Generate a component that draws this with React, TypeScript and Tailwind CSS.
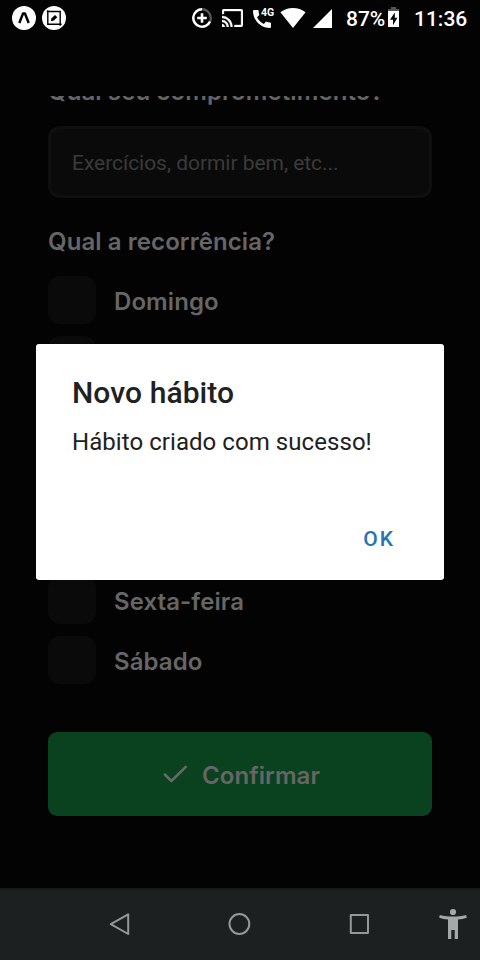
import React from "react";

const days = ["Domingo", "Segunda-feira", "Terça-feira", "Quarta-feira", "Quinta-feira", "Sexta-feira", "Sábado"];

function StatusBar() {
  return (
    <header className="flex h-9 shrink-0 items-center pl-3 font-['Roboto',sans-serif] text-white">
      <svg className="h-6 w-6 shrink-0" viewBox="0 0 24 24">
        <circle cx="12" cy="12" r="12" fill="#fff" />
        <path d="M7.3 17 L11.1 7.4 H12.9 L16.7 17" fill="none" stroke="#000" strokeWidth="2.5" strokeLinejoin="round" />
      </svg>
      <svg className="ml-1.5 h-6 w-6 shrink-0" viewBox="0 0 24 24">
        <circle cx="12" cy="12" r="12" fill="#fff" />
        <path d="M4.8 5.5H18.2V19.8M5.8 4.2V18.2H19.6" fill="none" stroke="#000" strokeWidth="1.4" />
        <path d="M8.8 15.2L9.6 12.2 13 8.9 15.3 11.2 11.9 14.5Z" fill="#000" />
      </svg>
      <svg className="ml-[126px] h-5 w-5 shrink-0" viewBox="0 0 20 20" fill="none" stroke="#fff">
        <path d="M10 1.3A8.7 8.7 0 0 1 17.8 13.8" stroke="#555" strokeWidth="2.4" />
        <path d="M10 1.3A8.7 8.7 0 1 0 18 13.4" strokeWidth="2.5" />
        <path d="M10 5.2V14.8M5.2 10H14.8" strokeWidth="2.6" />
      </svg>
      <svg className="ml-[10px] h-[18px] w-[21px] shrink-0" viewBox="1 3 22 18" fill="#fff" stroke="#fff" strokeWidth=".35" preserveAspectRatio="none">
        <path d="M21 3H3c-1.1 0-2 .9-2 2v3h2V5h18v14h-7v2h7c1.1 0 2-.9 2-2V5c0-1.1-.9-2-2-2zM1 18v3h3c0-1.66-1.34-3-3-3zm0-4v2c2.76 0 5 2.24 5 5h2c0-3.87-3.13-7-7-7zm0-4v2c4.97 0 9 4.03 9 9h2c0-6.08-4.93-11-11-11z" />
      </svg>
      <div className="relative ml-[10px] h-[18px] w-[21px] shrink-0">
        <svg className="mt-px h-[18px] w-[18px]" viewBox="3 3 18 18" fill="#fff">
          <path d="M20.01 15.38c-1.23 0-2.42-.2-3.53-.56-.35-.12-.74-.03-1.01.24l-1.57 1.97c-2.83-1.35-5.48-3.9-6.89-6.83l1.95-1.66c.27-.28.35-.67.24-1.02-.37-1.11-.56-2.3-.56-3.53 0-.54-.45-.99-.99-.99H4.19C3.65 3 3 3.24 3 3.99 3 13.28 10.73 21 20.01 21c.71 0 .99-.63.99-1.18v-3.45c0-.54-.45-.99-.99-.99z" />
        </svg>
        <span className="absolute -top-[1px] left-[8px] text-[10.5px] leading-[9px] font-bold">4G</span>
      </div>
      <svg className="ml-[6px] h-5 w-[26px] shrink-0" viewBox="0 0 26 20" fill="#fff">
        <path d="M13 20L.4 4.2C4 1.5 8.3 0 13 0s9 1.5 12.6 4.2Z" />
      </svg>
      <svg className="ml-[7px] h-[19px] w-[19px] shrink-0" viewBox="0 0 19 19" fill="#fff">
        <path d="M0 19L19 0V19Z" />
      </svg>
      <span className="mt-0.5 ml-[14px] w-[42px] text-[21px] leading-9 font-medium">87%</span>
      <svg className="-mt-0.5 h-5 w-[11px] shrink-0" viewBox="0 0 11 20">
        <path d="M3 0H8V2H11V5H0V2H3Z" fill="#555" />
        <path d="M0 4H11V20H0Z" fill="#fff" />
        <path d="M6.8 5.5L2 12.7H5V18.2L9.4 10.8H6.8Z" fill="#000" />
      </svg>
      <span className="mt-0.5 ml-[15px] text-[21px] leading-9 font-medium">11:36</span>
    </header>
  );
}

function NavigationBar() {
  return (
    <nav className="flex h-[72px] shrink-0 items-center border-t-2 border-[#151919] bg-[#1c2021] pl-[108px]">
      <svg className="h-6 w-6" viewBox="0 0 24 24" fill="none" stroke="#959898" strokeWidth="2" strokeLinejoin="round">
        <path d="M2.8 11.2L20.2 1.4V21Z" />
      </svg>
      <svg className="ml-[95px] h-6 w-6" viewBox="0 0 24 24" fill="none" stroke="#959898" strokeWidth="2">
        <circle cx="12.4" cy="11" r="9.9" />
      </svg>
      <svg className="ml-24 h-6 w-6" viewBox="0 0 24 24" fill="none" stroke="#959898" strokeWidth="2" strokeLinejoin="round">
        <path d="M3.8 2H21V20H3.8Z" />
      </svg>
      <svg className="ml-16 h-9 w-9 shrink-0" viewBox="0 0 36 36" fill="#a5a8a8">
        <circle cx="18" cy="5" r="3.1" />
        <path d="M4.8 8C9 9.2 13.5 9.6 18 9.6S27 9.2 31.2 8L31.8 10.7C29 11.7 26 12.2 23 12.6V32H19.7V23H16.3V32H13V12.6C10 12.2 7 11.7 4.2 10.7Z" />
      </svg>
    </nav>
  );
}

export default function App() {
  return (
    <div className="relative flex h-[960px] w-[480px] flex-col overflow-hidden bg-[#030303] font-['Inter',sans-serif] text-[#666]">
      <StatusBar />
      <main className="mt-[60px] flex min-h-0 flex-1 flex-col overflow-hidden px-12">
        <h2 className="-mt-[19px] h-[49px] shrink-0 text-2xl leading-[30px] font-semibold tracking-[0.1px] whitespace-nowrap">Qual seu comprometimento?</h2>
        <input
          className="h-[72px] shrink-0 rounded-xl border-[3px] border-[#0f0f10] bg-[#0a0a0a] px-[21px] pt-0.5 font-['Roboto',sans-serif] text-[21px] tracking-[-0.04px] outline-none placeholder:text-[#3a3a3b] placeholder:opacity-100"
          placeholder="Exercícios, dormir bem, etc..."
        />
        <h2 className="mt-[29px] h-[49px] shrink-0 text-2xl leading-[30px] font-semibold tracking-[0.08px] whitespace-nowrap">Qual a recorrência?</h2>
        <ul className="flex flex-col gap-3">
          {days.map((day) => (
            <li key={day} className="flex h-12 items-center gap-[18px] text-2xl font-semibold tracking-[0.08px]">
              <span className="h-12 w-12 rounded-xl bg-[#0a0a0a]" />
              <span className="mt-1">{day}</span>
            </li>
          ))}
        </ul>
        <button className="mt-12 flex h-[84px] shrink-0 items-center justify-center rounded-[9px] bg-[#0a411f] text-2xl font-semibold tracking-[0.08px]">
          <svg className="mr-3 h-[30px] w-[30px]" viewBox="0 0 30 30" fill="none" stroke="#666b67" strokeWidth="2.5" strokeLinecap="round" strokeLinejoin="round">
            <path d="M4.8 15.5L11.4 22 25.8 7.8" />
          </svg>
          <span className="mt-1">Confirmar</span>
        </button>
      </main>
      <NavigationBar />
      <section role="dialog" className="absolute top-[344px] left-9 flex h-[236px] w-[408px] flex-col rounded-[3px] bg-white px-9 pt-[31px] font-['Roboto',sans-serif] text-[#212121]">
        <h1 className="text-[30px] leading-9 font-medium tracking-[0.08px]">Novo hábito</h1>
        <p className="mt-[13px] text-2xl leading-9 tracking-[0.06px]">Hábito criado com sucesso!</p>
        <button className="mt-[61px] mr-[13px] self-end text-[21px] leading-9 font-medium tracking-[2px] text-[#2474b0]">OK</button>
      </section>
    </div>
  );
}
